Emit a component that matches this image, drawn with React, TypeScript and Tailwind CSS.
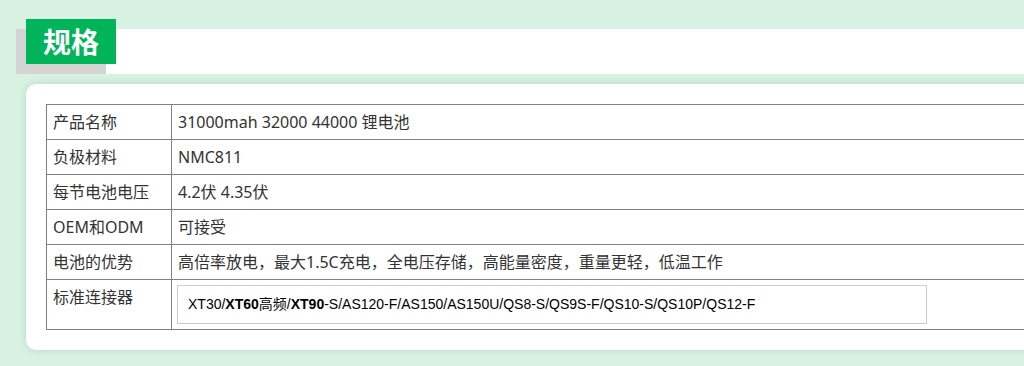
const rows: { label: string; value: string }[] = [
  { label: '产品名称', value: '31000mah 32000 44000 锂电池' },
  { label: '负极材料', value: 'NMC811' },
  { label: '每节电池电压', value: '4.2伏 4.35伏' },
  { label: 'OEM和ODM', value: '可接受' },
  { label: '电池的优势', value: '高倍率放电，最大1.5C充电，全电压存储，高能量密度，重量更轻，低温工作' },
]

export default function App() {
  return (
    <div className="w-[1024px] h-[366px] overflow-hidden bg-[#d7f2e3] font-['Noto_Sans','Noto_Sans_CJK_SC',sans-serif]">
      {/* Section heading */}
      <div className="pt-[29px] pl-[16px]">
        <div className="flex h-[45px] bg-white">
          <div className="w-[90px] h-[45px] -mt-[10px] ml-[10px] bg-[#00b45a] shadow-[-10px_10px_0_#d4d4d4] flex items-center justify-center">
            <span className="text-white text-[28px] font-bold leading-none">规格</span>
          </div>
        </div>
      </div>

      {/* Spec card */}
      <div className="mt-[10px] ml-[26px] w-[1100px] bg-white rounded-[10px] p-[20px] shadow-[0_0_8px_rgba(0,0,0,0.12)]">
        <table className="w-[1100px] border-collapse text-[16px] text-[#333] leading-[19px]">
          <tbody>
            {rows.map((r) => (
              <tr key={r.label} className="h-[35px]">
                <td className="w-[125px] border border-[#808080] px-[6px] align-middle">{r.label}</td>
                <td className="border border-[#808080] px-[6px] align-middle">{r.value}</td>
              </tr>
            ))}
            <tr>
              <td className="border border-[#808080] px-[6px] pt-[8px] align-top">标准连接器</td>
              <td className="border border-[#808080] p-[5px]">
                <div className="w-[750px] border border-[#cccccc] px-[10px] py-[10px] text-[14px] leading-[17px] text-black font-['Liberation_Sans','Noto_Sans_CJK_SC',sans-serif]">
                  XT30/<b>XT60</b>高频/<b>XT90</b>-S/AS120-F/AS150/AS150U/QS8-S/QS9S-F/QS10-S/QS10P/QS12-F
                </div>
              </td>
            </tr>
          </tbody>
        </table>
      </div>
    </div>
  )
}
